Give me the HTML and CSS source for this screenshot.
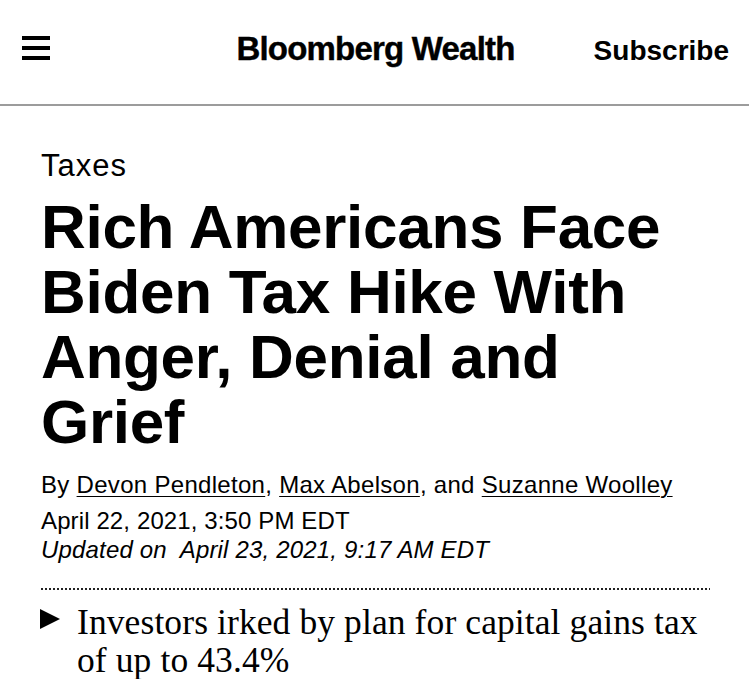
FILE: index.html
```html
<!DOCTYPE html>
<html lang="en">
<head>
<meta charset="utf-8">
<title>Bloomberg Wealth</title>
<link rel="stylesheet" href="styles.css">
</head>
<body>
<header class="site-header">
  <div class="menu" aria-label="Menu">
    <span class="bar"></span>
    <span class="bar"></span>
    <span class="bar"></span>
  </div>
  <div class="logo">Bloomberg Wealth</div>
  <a class="subscribe">Subscribe</a>
</header>
<main class="article">
  <div class="kicker">Taxes</div>
  <h1 class="headline">Rich Americans Face Biden Tax Hike With Anger, Denial and Grief</h1>
  <div class="byline">By <a class="author">Devon Pendleton</a>, <a class="author">Max Abelson</a>, and <a class="author">Suzanne Woolley</a></div>
  <div class="dates">
    <div class="published">April 22, 2021, 3:50 PM EDT</div>
    <div class="updated">Updated on&nbsp; April 23, 2021, 9:17 AM EDT</div>
  </div>
  <div class="divider"></div>
  <ul class="summary">
    <li class="summary-item"><span class="arrow"></span><span class="summary-text">Investors irked by plan for capital gains tax of up to 43.4%</span></li>
  </ul>
</main>
</body>
</html>
```

FILE: styles.css
```css
* { box-sizing: border-box; }

html, body {
  margin: 0;
  padding: 0;
  background: #fff;
  color: #000;
  font-family: "Liberation Sans", Arial, sans-serif;
}

body { overflow: hidden; }

.site-header {
  height: 106px;
  display: grid;
  grid-template-columns: 1fr auto 1fr;
  align-items: center;
  padding: 0 20px 8px 22px;
  border-bottom: 2px solid #9c9c9c;
}

.menu {
  display: flex;
  flex-direction: column;
  gap: 6px;
  width: 28px;
}

.bar {
  display: block;
  height: 4px;
  background: #000;
}

.logo {
  font-size: 33px;
  line-height: 1;
  font-weight: 700;
  letter-spacing: -0.8px;
  -webkit-text-stroke: 0.4px #000;
  white-space: nowrap;
}

.subscribe {
  justify-self: end;
  font-size: 28px;
  line-height: 1;
  font-weight: 700;
  margin-top: 6px;
  color: #000;
}

.article {
  padding: 42px 39px 0 41px;
}

.kicker {
  font-size: 31px;
  line-height: 36px;
  letter-spacing: 1px;
}

.headline {
  margin: 10px 0 0;
  font-size: 62px;
  line-height: 65px;
  font-weight: 700;
  letter-spacing: -0.3px;
}

.byline {
  margin-top: 16px;
  font-size: 24px;
  line-height: 30px;
  letter-spacing: 0.3px;
}

.author {
  color: #000;
  text-decoration: underline;
  text-decoration-thickness: 1px;
  text-underline-offset: 3px;
}

.dates {
  margin-top: 6px;
  font-size: 24px;
  line-height: 29px;
  letter-spacing: 0.12px;
}

.updated { font-style: italic; letter-spacing: 0.18px; }

.divider {
  margin-top: 24px;
  height: 2px;
  background-image: linear-gradient(to right, #222 0 2px, transparent 2px 4px);
  background-size: 4px 2px;
  background-repeat: repeat-x;
}

.summary {
  list-style: none;
  margin: 13px 0 0;
  padding: 0;
}

.summary-item {
  display: flex;
  align-items: flex-start;
  gap: 17px;
}

.arrow {
  flex: none;
  width: 0;
  height: 0;
  margin-top: 6px;
  margin-left: -1px;
  border-top: 10px solid transparent;
  border-bottom: 10px solid transparent;
  border-left: 20px solid #000;
}

.summary-text {
  font-family: "Liberation Serif", "Times New Roman", serif;
  font-size: 35.5px;
  line-height: 38px;
  letter-spacing: 0.1px;
}
```
